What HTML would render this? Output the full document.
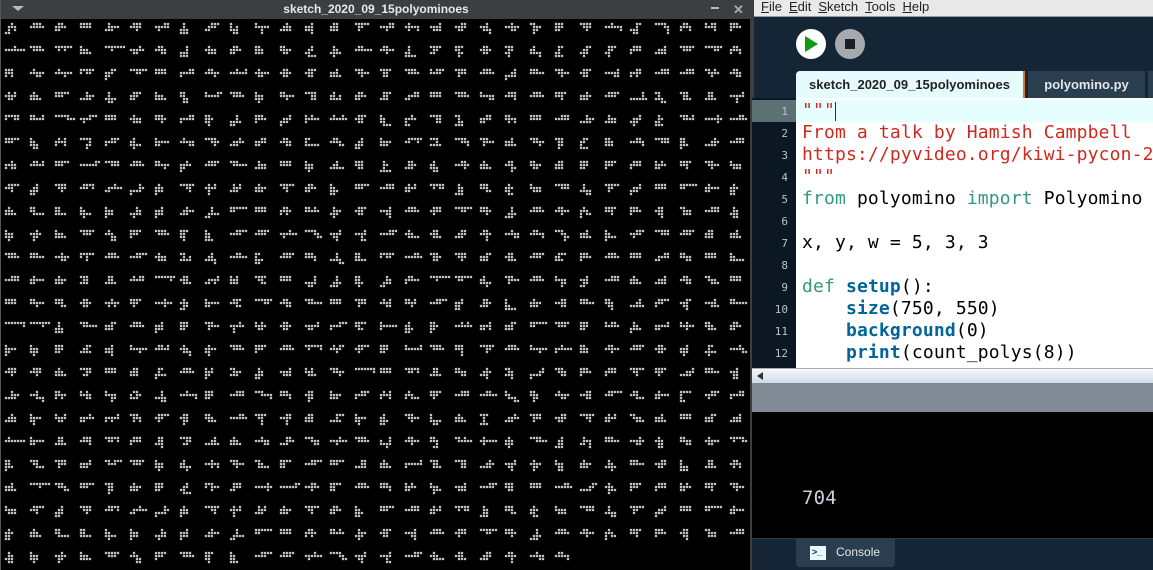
<!DOCTYPE html>
<html><head><meta charset="utf-8"><style>
*{margin:0;padding:0;box-sizing:border-box}
body{width:1153px;height:570px;overflow:hidden;background:#000;position:relative;font-family:"Liberation Sans",sans-serif}
.abs{position:absolute}
#title{left:0;top:0;width:752px;height:19px;background:#3c3f41;color:#e8e8e8;font-weight:bold;font-size:12px;text-align:center;line-height:18px}
#cv{left:1px;top:19px;background:#000}
#lb{left:0;top:0;width:1px;height:570px;background:#555}
#sep{left:750px;top:0;width:4px;height:570px;background:#3c3f41}
#menu{left:754px;top:0;width:399px;height:17px;background:#e9e9e9;font-size:13px;color:#222;line-height:13px;border-bottom:1px solid #999}
#menu span{margin-left:7px}
#ide{left:754px;top:17px;width:399px;height:521px;background:#142536}
.code{font-family:"DejaVu Sans Mono","Liberation Mono",monospace;font-size:18px;white-space:pre;letter-spacing:0.15px}
.ln{position:absolute;left:752px;width:44px;text-align:right;padding-right:8px;font-family:"DejaVu Sans Mono",monospace;font-size:11px;color:#b8c4cc}
.cl{position:absolute;left:802px;line-height:22px}
.r{color:#cc2a1f}.t{color:#33997e}.b{color:#006699;font-weight:bold}.k{color:#000}
</style></head><body>
<div id="title" class="abs">sketch_2020_09_15polyominoes</div>
<div class="abs" style="left:12px;top:6px;width:0;height:0;border-left:6px solid transparent;border-right:6px solid transparent;border-top:5px solid #bbb"></div>
<div class="abs" style="left:711px;top:7px;width:8px;height:2px;background:#bbb"></div>
<div class="abs" style="left:733px;top:2px;color:#aaa;font-size:13px;font-weight:bold">✕</div>
<canvas id="cv" class="abs" width="749" height="551"></canvas>
<div id="lb" class="abs"></div>
<div id="sep" class="abs"></div>
<div id="menu" class="abs"><span><u>F</u>ile</span><span><u>E</u>dit</span><span><u>S</u>ketch</span><span><u>T</u>ools</span><span><u>H</u>elp</span></div>
<div id="ide" class="abs"></div>
<div class="abs" style="left:796px;top:29px;width:30px;height:30px;border-radius:50%;background:#fff"></div>
<div class="abs" style="left:805px;top:36px;width:0;height:0;border-top:8px solid transparent;border-bottom:8px solid transparent;border-left:13px solid #119911"></div>
<div class="abs" style="left:835px;top:29px;width:30px;height:30px;border-radius:50%;background:#a6a9ad"></div>
<div class="abs" style="left:845px;top:39px;width:10px;height:10px;background:#1b1f24"></div>
<div class="abs" style="left:796px;top:71px;width:229px;height:27px;background:#e6fcfc;border-radius:4px 0 0 0;border-right:2px solid #e07a1f;font-weight:bold;font-size:13px;color:#222;text-align:center;line-height:27px">sketch_2020_09_15polyominoes</div>
<div class="abs" style="left:1028px;top:71px;width:117px;height:27px;background:#2b3e4f;font-weight:bold;font-size:13px;color:#e0e6ea;text-align:center;line-height:27px">polyomino.py</div>
<div class="abs" style="left:1148px;top:71px;width:5px;height:27px;background:#2b3e4f"></div>
<div class="abs" style="left:752px;top:98px;width:44px;height:270px;background:#0b1823"></div>
<div class="abs" style="left:752px;top:100px;width:44px;height:22px;background:#5b7174"></div>
<div class="abs" style="left:796px;top:98px;width:357px;height:270px;background:#fff"></div>
<div class="abs" style="left:796px;top:100px;width:357px;height:22px;background:#e6fefe"></div>
<div class="abs" style="left:835px;top:102px;width:1px;height:19px;background:#333"></div>
<div class="ln" style="top:105px">1</div><div class="ln" style="top:127px">2</div><div class="ln" style="top:149px">3</div><div class="ln" style="top:171px">4</div><div class="ln" style="top:193px">5</div><div class="ln" style="top:215px">6</div><div class="ln" style="top:237px">7</div><div class="ln" style="top:259px">8</div><div class="ln" style="top:281px">9</div><div class="ln" style="top:303px">10</div><div class="ln" style="top:325px">11</div><div class="ln" style="top:347px">12</div>
<div class="code cl" style="top:100px;width:351px;overflow:hidden"><span class="r">"""</span>
<span class="r">From a talk by Hamish Campbell</span>
<span class="r">https://pyvideo.org/kiwi-pycon-2019</span>
<span class="r">"""</span>
<span class="t">from</span> polyomino <span class="t">import</span> Polyomino

x, y, w = 5, 3, 3

<span class="t">def</span> <span class="b">setup</span>():
    <span class="b">size</span>(750, 550)
    <span class="b">background</span>(0)
    <span class="b">print</span>(count_polys(8))</div>
<div class="abs" style="left:752px;top:368px;width:401px;height:15px;background:linear-gradient(#f4f8fc,#cfdbe6);border-top:1px solid #aab"></div>
<div class="abs" style="left:757px;top:372px;width:0;height:0;border-top:4px solid transparent;border-bottom:4px solid transparent;border-right:6px solid #333"></div>
<div class="abs" style="left:752px;top:383px;width:401px;height:29px;background:#808b95"></div>
<div class="abs" style="left:752px;top:412px;width:401px;height:126px;background:#000"></div>
<div class="abs code" style="left:802px;top:487px;color:#c8d2dc;font-size:19px">704</div>
<div class="abs" style="left:752px;top:538px;width:401px;height:32px;background:#152536;border-top:1px solid #2a3a48"></div>
<div class="abs" style="left:796px;top:539px;width:99px;height:28px;background:#2b3e4f;border-radius:0 0 4px 4px"></div>
<div class="abs" style="left:810px;top:546px;width:16px;height:14px;background:#e8fbfb;font-size:9px;color:#152536;font-weight:bold;line-height:13px;padding-left:2px">&gt;_</div>
<div class="abs" style="left:836px;top:545px;font-size:12px;color:#e0e6ea">Console</div>
<script>
var c=document.getElementById('cv').getContext('2d');
c.fillStyle='#000';c.fillRect(0,0,749,551);c.fillStyle='#fff';
var s=98765;function rnd(){s=(s*1103515245+12345)&0x7fffffff;return s/0x7fffffff;}
var dirs=[[1,0],[1,0],[-1,0],[-1,0],[1,0],[0,1],[0,-1]];
for(var r=0;r<24;r++){for(var col=0;col<30;col++){
 if(r==23&&col>=23)break;
 var cells=[[0,0]],set={'0,0':1},tries=0;
 while(cells.length<8&&tries<500){tries++;var b=cells[Math.floor(rnd()*cells.length)];var d=dirs[Math.floor(rnd()*dirs.length)];
  var nx=b[0]+d[0],ny=b[1]+d[1];
  if(set[nx+','+ny])continue;
  var minx=nx,maxx=nx,miny=ny,maxy=ny;cells.forEach(function(p){minx=Math.min(minx,p[0]);maxx=Math.max(maxx,p[0]);miny=Math.min(miny,p[1]);maxy=Math.max(maxy,p[1]);});
  if(maxx-minx>6||maxy-miny>3)continue;
  set[nx+','+ny]=1;cells.push([nx,ny]);}
 var mx=1e9,my=1e9;cells.forEach(function(p){mx=Math.min(mx,p[0]);my=Math.min(my,p[1]);});
 var ox=4+col*25,oy=4+r*23;
 cells.forEach(function(p){c.fillRect(ox+(p[0]-mx)*3,oy+(p[1]-my)*3,2,2);});
}}
</script>
</body></html>
